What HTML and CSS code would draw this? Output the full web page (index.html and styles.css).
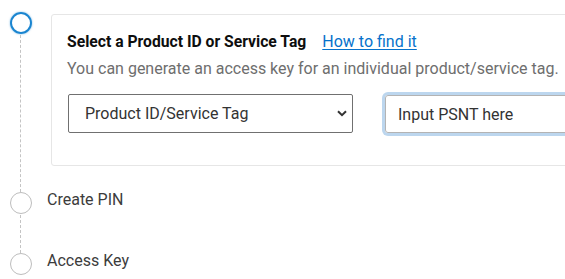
FILE: index.html
```html
<!DOCTYPE html>
<html lang="en">
<head>
<meta charset="utf-8">
<link rel="stylesheet" href="styles.css">
</head>
<body>
<ol class="stepper">
  <li class="step step-active">
    <div class="rail">
      <span class="dot dot-active"></span>
      <span class="line"></span>
    </div>
    <div class="card">
      <div class="card-head">
        <span class="card-title">Select a Product ID or Service Tag</span>
        <a class="help-link" href="#">How to find it</a>
      </div>
      <p class="card-desc">You can generate an access key for an individual product/service tag.</p>
      <div class="fields">
        <div class="select-box">
          <span class="select-value">Product ID/Service Tag</span>
          <svg class="chevron" width="10" height="7" viewBox="0 0 10 7"><path d="M1 1.2 L5 5.2 L9 1.2" fill="none" stroke="#333" stroke-width="2"/></svg>
        </div>
        <div class="input-box">
          <span class="input-value">Input PSNT here</span>
        </div>
      </div>
    </div>
  </li>
  <li class="step step-mid">
    <div class="rail">
      <span class="dot"></span>
      <span class="line"></span>
    </div>
    <span class="step-label">Create PIN</span>
  </li>
  <li class="step">
    <div class="rail">
      <span class="dot"></span>
    </div>
    <span class="step-label">Access Key</span>
  </li>
</ol>
</body>
</html>
```
FILE: styles.css
```css
html, body {
  margin: 0;
  padding: 0;
  background: #ffffff;
  overflow: hidden;
}
body {
  font-family: Roboto, "Liberation Sans", Arial, sans-serif;
  width: 565px;
  height: 279px;
}
.stepper {
  list-style: none;
  margin: 0;
  padding: 12px 0 0 10px;
}
.step {
  display: flex;
  align-items: stretch;
}
.rail {
  display: flex;
  flex-direction: column;
  width: 22px;
  flex: none;
}
.dot {
  display: block;
  width: 22px;
  height: 22px;
  box-sizing: border-box;
  border: 1px solid #bdbdbd;
  border-radius: 50%;
  flex: none;
}
.dot-active {
  border: 2px solid #1a85d0;
  box-shadow: 0 0 2px rgba(26, 133, 208, 0.6);
}
.line {
  flex: 1;
  width: 0;
  margin: 1px 0 0 10px;
  border-left: 1px dashed #c4c4c4;
}
.card {
  margin: 2px 0 26px 19px;
  width: 640px;
  height: 152px;
  box-sizing: border-box;
  border: 1px solid #e6e6e6;
  border-radius: 3px;
  padding: 17px 15px 0 15px;
  flex: none;
}
.card-head {
  display: flex;
  align-items: baseline;
  gap: 16px;
  line-height: 20px;
}
.card-title {
  font-size: 15.7px;
  font-weight: 700;
  color: #0e0e0e;
}
.help-link {
  font-size: 16px;
  color: #0672cb;
  text-decoration: underline;
  text-underline-offset: 2px;
}
.card-desc {
  margin: 5px 0 0 0;
  font-size: 16px;
  line-height: 24px;
  color: #6e6e6e;
}
.fields {
  display: flex;
  gap: 32px;
  margin-top: 13px;
}
.select-box {
  width: 285px;
  height: 39px;
  box-sizing: border-box;
  border: 1px solid #707070;
  border-radius: 2px;
  display: flex;
  align-items: center;
  justify-content: space-between;
  padding: 0 5px 0 16px;
  margin-left: 1px;
}
.select-value, .input-value {
  font-size: 16px;
  color: #333333;
}
.chevron {
  display: block;
}
.input-box {
  width: 285px;
  height: 38px;
  box-sizing: border-box;
  margin-top: 1px;
  border: 1px solid #b3b3b3;
  border-radius: 3px;
  box-shadow: 0 0 0 3px #bcd6ee;
  display: flex;
  align-items: center;
  padding: 0 12px;
}
.step-mid {
  height: 61px;
}
.step-label {
  margin-left: 15px;
  font-size: 16px;
  line-height: 16px;
  color: #3c3c3c;
}
```
